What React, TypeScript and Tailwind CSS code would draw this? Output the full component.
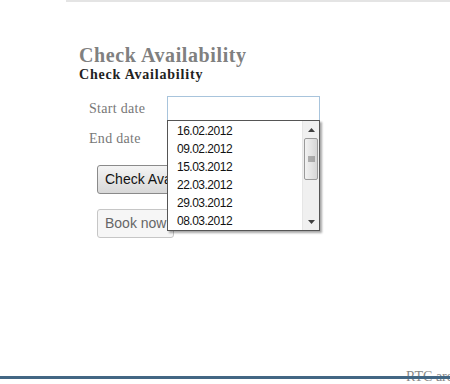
const dates = ['16.02.2012', '09.02.2012', '15.03.2012', '22.03.2012', '29.03.2012', '08.03.2012']

function Scrollbar() {
  return (
    <div className="flex h-full w-[17px] flex-col border-l border-[#e6e6e6] bg-[#f0f0f0]">
      <div className="flex h-[17px] items-center justify-center">
        <svg width="7" height="4" viewBox="0 0 7 4">
          <path d="M0 4 L3.5 0 L7 4 Z" fill="#404040" />
        </svg>
      </div>
      <div className="mx-[1px] flex h-[42px] items-center justify-center rounded-[2px] border border-[#9a9a9a] bg-gradient-to-r from-[#f2f2f2] to-[#d6d6d6]">
        <svg width="7" height="7" viewBox="0 0 7 7">
          <path d="M0 1h7M0 3h7M0 5h7" stroke="#707070" strokeWidth="1" />
        </svg>
      </div>
      <div className="flex-1" />
      <div className="flex h-[17px] items-center justify-center">
        <svg width="7" height="4" viewBox="0 0 7 4">
          <path d="M0 0 L3.5 4 L7 0 Z" fill="#404040" />
        </svg>
      </div>
    </div>
  )
}

export default function App() {
  return (
    <div className="relative h-[384px] w-[450px] overflow-hidden bg-white font-['Liberation_Serif',serif]">
      <div className="ml-[66px] h-[2px] bg-[#e4e4e4]" />

      <div className="pl-[79px] pt-[41px]">
        <h1 className="text-[20px] font-bold leading-[24px] tracking-[0.6px] text-[#808080]">Check Availability</h1>
        <h2 className="text-[14px] font-bold leading-[15px] tracking-[0.8px] text-[#222]">Check Availability</h2>

        <div className="mt-[14px] flex flex-col gap-[5px] pl-[10px]">
          <div className="flex items-center">
            <span className="w-[78px] text-[14px] tracking-[0.3px] text-[#777]">Start date</span>
            <div className="relative">
              <div className="h-[25px] w-[153px] border border-[#a8c4dc] bg-white" />
              <div className="absolute left-0 top-[24px] z-10 flex h-[111px] w-[153px] border border-[#555] bg-white shadow-[2px_2px_2px_rgba(0,0,0,0.35)]">
                <ul className="flex-1 pt-[1px] pl-[9px] font-['Liberation_Sans',sans-serif] text-[12px] leading-[18px] tracking-[-0.5px] text-[#111]">
                  {dates.map(d => (
                    <li key={d}>{d}</li>
                  ))}
                </ul>
                <Scrollbar />
              </div>
            </div>
          </div>
          <div className="flex h-[25px] items-center">
            <span className="w-[78px] text-[14px] tracking-[0.3px] text-[#777]">End date</span>
          </div>
        </div>

        <div className="mt-[14px] flex flex-col items-start gap-[15px] pl-[18px] font-['Liberation_Sans',sans-serif]">
          <button className="h-[29px] rounded-[3px] border border-[#8a8a8a] bg-gradient-to-b from-[#f4f4f4] to-[#d8d8d8] px-[7px] text-[14px] text-[#111]">
            Check Availability
          </button>
          <button className="h-[29px] rounded-[3px] border border-[#c6c6c6] bg-[#f6f6f6] px-[7px] text-[14px] text-[#666]">
            Book now
          </button>
        </div>
      </div>

      <span className="absolute left-[406px] top-[366px] whitespace-nowrap text-[14px] text-[#888]">RTC are</span>
      <div className="absolute bottom-[5px] left-0 h-[3px] w-full bg-[#436784]" />
    </div>
  )
}
